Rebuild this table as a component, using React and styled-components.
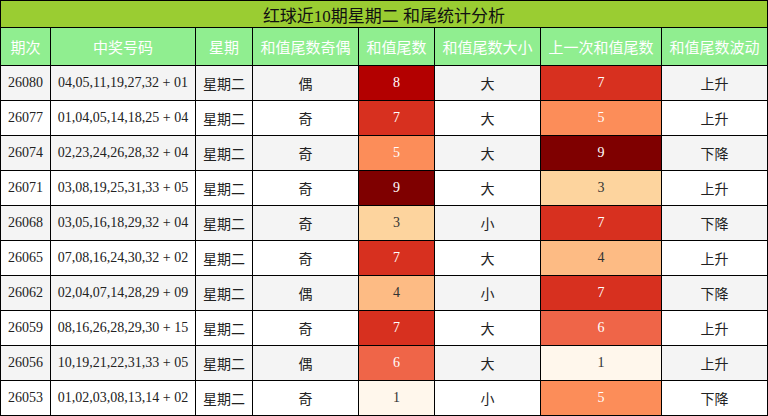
import React from "react";
import styled, { createGlobalStyle } from "styled-components";

const GlobalStyle = createGlobalStyle`
  html, body {
    margin: 0;
    padding: 0;
    background: #fff;
  }
  body {
    font-family: "Liberation Serif", "Noto Sans CJK SC", serif;
  }
`;

const COLS = "49px 144px 56px 105px 75px 105px 120px 105px";

// ColorBrewer OrRd, indexed by the tail digit
const HEAT = [
  "#fff7ec",
  "#fff7ec",
  "#fee8c8",
  "#fdd49e",
  "#fdbb84",
  "#fc8d59",
  "#ef6548",
  "#d7301f",
  "#b30000",
  "#7f0000",
];

const rows = [
  ["26080", "04,05,11,19,27,32 + 01", "偶", 8, "大", 7, "上升"],
  ["26077", "01,04,05,14,18,25 + 04", "奇", 7, "大", 5, "上升"],
  ["26074", "02,23,24,26,28,32 + 04", "奇", 5, "大", 9, "下降"],
  ["26071", "03,08,19,25,31,33 + 05", "奇", 9, "大", 3, "上升"],
  ["26068", "03,05,16,18,29,32 + 04", "奇", 3, "小", 7, "下降"],
  ["26065", "07,08,16,24,30,32 + 02", "奇", 7, "大", 4, "上升"],
  ["26062", "02,04,07,14,28,29 + 09", "偶", 4, "小", 7, "下降"],
  ["26059", "08,16,26,28,29,30 + 15", "奇", 7, "大", 6, "上升"],
  ["26056", "10,19,21,22,31,33 + 05", "偶", 6, "大", 1, "上升"],
  ["26053", "01,02,03,08,13,14 + 02", "奇", 1, "小", 5, "下降"],
];

const headers = [
  "期次",
  "中奖号码",
  "星期",
  "和值尾数奇偶",
  "和值尾数",
  "和值尾数大小",
  "上一次和值尾数",
  "和值尾数波动",
];

const Table = styled.div`
  width: 768px;
  box-sizing: border-box;
  display: flex;
  flex-direction: column;
  gap: 1px;
  padding: 1px;
  background: #000;
`;

const Title = styled.div`
  height: 26px;
  display: flex;
  align-items: center;
  justify-content: center;
  background: #9acd32;
  color: #111;
  font-size: 17px;
`;

const Row = styled.div`
  display: grid;
  grid-template-columns: ${COLS};
  gap: 1px;
  height: ${(p) => (p.$head ? 37 : 34)}px;
`;

const HeadCell = styled.div`
  display: flex;
  align-items: center;
  justify-content: center;
  background: #90ee90;
  color: #fff;
  font-size: 15px;
  white-space: nowrap;
`;

const Cell = styled.div`
  display: flex;
  align-items: center;
  justify-content: center;
  background: ${(p) => (p.$odd ? "#f4f4f4" : "#fff")};
  color: #222;
  font-size: 14px;
  white-space: nowrap;
`;

const HeatCell = styled(Cell)`
  background: ${(p) => HEAT[p.$digit]};
  color: ${(p) => (p.$digit >= 5 ? "#fff" : "#333")};
`;

export default function App() {
  return (
    <>
      <GlobalStyle />
      <Table>
        <Title>红球近10期星期二 和尾统计分析</Title>
        <Row $head>
          {headers.map((h) => (
            <HeadCell key={h}>{h}</HeadCell>
          ))}
        </Row>
        {rows.map((r, i) => {
          const odd = i % 2 === 0;
          return (
            <Row key={r[0]}>
              <Cell $odd={odd}>{r[0]}</Cell>
              <Cell $odd={odd}>{r[1]}</Cell>
              <Cell $odd={odd}>星期二</Cell>
              <Cell $odd={odd}>{r[2]}</Cell>
              <HeatCell $digit={r[3]}>{r[3]}</HeatCell>
              <Cell $odd={odd}>{r[4]}</Cell>
              <HeatCell $digit={r[5]}>{r[5]}</HeatCell>
              <Cell $odd={odd}>{r[6]}</Cell>
            </Row>
          );
        })}
      </Table>
    </>
  );
}
